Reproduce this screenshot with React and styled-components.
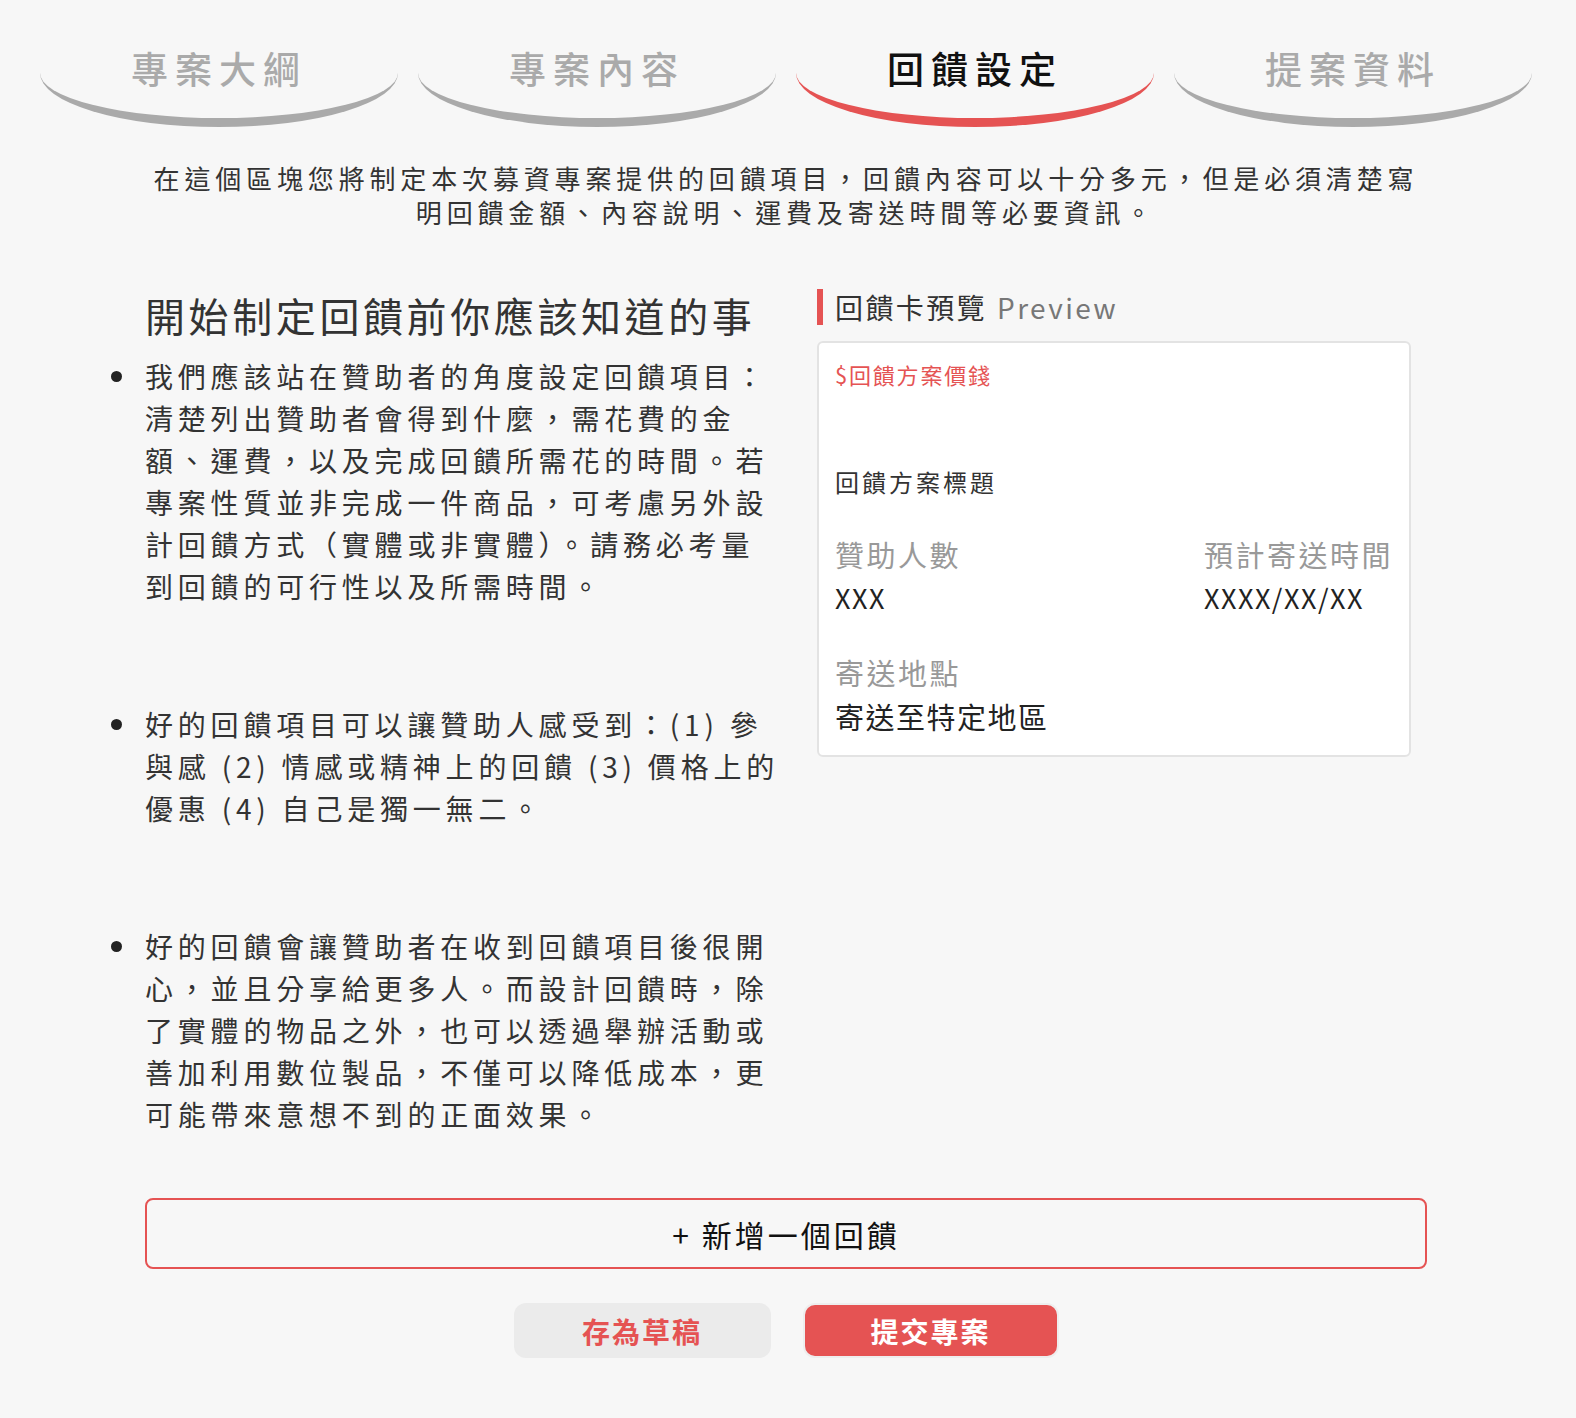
import styled, { createGlobalStyle } from "styled-components";

const GlobalStyle = createGlobalStyle`
  body {
    margin: 0;
    background: #f7f7f7;
    font-family: "Noto Sans CJK TC", "Noto Sans", sans-serif;
    color: #333;
  }
`;

const Page = styled.div`
  padding: 20px 44px 60px 40px;
`;

const Tabs = styled.nav`
  display: flex;
  gap: 20px;
`;

const Tab = styled.div`
  width: 358px;
  height: 98px;
  display: flex;
  justify-content: center;
  border-bottom: 9px solid ${(p) => (p.$active ? "#e55353" : "#aaaaaa")};
  border-radius: 0 0 179px 179px / 0 0 54px 54px;
  font-size: 37px;
  line-height: 96px;
  letter-spacing: 7px;
  font-weight: 500;
  color: ${(p) => (p.$active ? "#111" : "#aaaaaa")};
`;

const Intro = styled.p`
  margin: 34px auto 0;
  max-width: 1280px;
  text-align: center;
  font-size: 26px;
  line-height: 34px;
  letter-spacing: 4.85px;
  color: #333;
`;

const Main = styled.section`
  width: 1282px;
  margin: 60px auto 0;
`;

const Columns = styled.div`
  display: grid;
  grid-template-columns: 638px 594px;
  column-gap: 34px;
  align-items: start;
`;

const Heading = styled.h2`
  margin: 0 0 14px;
  font-size: 40px;
  line-height: 52px;
  font-weight: 400;
  letter-spacing: 3.6px;
  color: #333;
`;

const Tips = styled.ul`
  margin: 0;
  padding: 0;
  list-style: none;
`;

const Tip = styled.li`
  position: relative;
  font-size: 28px;
  line-height: 42px;
  letter-spacing: 4.8px;
  color: #333;
  margin-bottom: 96px;
  &:last-child {
    margin-bottom: 0;
  }
  &::before {
    content: "";
    position: absolute;
    left: -34px;
    top: 16px;
    width: 11px;
    height: 11px;
    border-radius: 50%;
    background: #222;
  }
`;

const PreviewTitle = styled.div`
  display: flex;
  align-items: center;
  height: 36px;
  border-left: 6px solid #e55353;
  padding-left: 12px;
  font-size: 28px;
  letter-spacing: 2.4px;
  color: #333;
  span {
    margin-left: 10px;
    color: #777;
    letter-spacing: 2.4px;
  }
`;

const Card = styled.div`
  margin-top: 16px;
  background: #fff;
  border: 2px solid #e3e3e3;
  border-radius: 6px;
  padding: 15px 16px 17px;
`;

const Price = styled.div`
  font-size: 22px;
  line-height: 33px;
  color: #e55353;
  letter-spacing: 1.8px;
  margin-bottom: 74px;
`;

const CardTitle = styled.div`
  font-size: 24px;
  line-height: 33px;
  color: #333;
  letter-spacing: 3px;
  margin-bottom: 34px;
`;

const InfoGrid = styled.div`
  display: grid;
  grid-template-columns: 1fr auto;
  row-gap: 30px;
`;

const Info = styled.div`
  display: flex;
  flex-direction: column;
`;

const Label = styled.div`
  font-size: 29px;
  line-height: 44px;
  color: #999;
  letter-spacing: 2.5px;
`;

const Value = styled.div`
  font-size: ${(p) => (p.$small ? "27px" : "29px")};
  line-height: 44px;
  color: #222;
  letter-spacing: 1.5px;
`;

const AddButton = styled.button`
  display: block;
  width: 100%;
  height: 71px;
  margin-top: 63px;
  background: transparent;
  border: 2px solid #e55353;
  border-radius: 8px;
  font-family: inherit;
  font-size: 30px;
  letter-spacing: 3px;
  color: #111;
  cursor: pointer;
`;

const Actions = styled.div`
  display: flex;
  justify-content: center;
  gap: 32px;
  margin-top: 34px;
`;

const ActionButton = styled.button`
  width: ${(p) => (p.$primary ? "256px" : "257px")};
  height: 55px;
  border: ${(p) => (p.$primary ? "2px solid #eee" : "none")};
  border-radius: 12px;
  background: ${(p) => (p.$primary ? "#e55353" : "#ebebeb")};
  color: ${(p) => (p.$primary ? "#fff" : "#e55353")};
  font-family: inherit;
  font-size: 28px;
  font-weight: 700;
  letter-spacing: 2px;
  cursor: pointer;
`;

const tabs = ["專案大綱", "專案內容", "回饋設定", "提案資料"];

const tips = [
  "我們應該站在贊助者的角度設定回饋項目：清楚列出贊助者會得到什麼，需花費的金額、運費，以及完成回饋所需花的時間。若專案性質並非完成一件商品，可考慮另外設計回饋方式（實體或非實體）。請務必考量到回饋的可行性以及所需時間。",
  "好的回饋項目可以讓贊助人感受到：(1) 參與感 (2) 情感或精神上的回饋 (3) 價格上的優惠 (4) 自己是獨一無二。",
  "好的回饋會讓贊助者在收到回饋項目後很開心，並且分享給更多人。而設計回饋時，除了實體的物品之外，也可以透過舉辦活動或善加利用數位製品，不僅可以降低成本，更可能帶來意想不到的正面效果。",
];

const App = () => {
  return (
    <>
      <GlobalStyle />
      <Page>
        <Tabs>
          {tabs.map((t) => (
            <Tab key={t} $active={t === "回饋設定"}>
              {t}
            </Tab>
          ))}
        </Tabs>

        <Intro>
          在這個區塊您將制定本次募資專案提供的回饋項目，回饋內容可以十分多元，但是必須清楚寫明回饋金額、內容說明、運費及寄送時間等必要資訊。
        </Intro>

        <Main>
          <Columns>
            <div>
              <Heading>開始制定回饋前你應該知道的事</Heading>
              <Tips>
                {tips.map((t, i) => (
                  <Tip key={i}>{t}</Tip>
                ))}
              </Tips>
            </div>

            <div>
              <PreviewTitle>
                回饋卡預覽<span>Preview</span>
              </PreviewTitle>
              <Card>
                <Price>$回饋方案價錢</Price>
                <CardTitle>回饋方案標題</CardTitle>
                <InfoGrid>
                  <Info>
                    <Label>贊助人數</Label>
                    <Value $small>XXX</Value>
                  </Info>
                  <Info>
                    <Label>預計寄送時間</Label>
                    <Value $small>XXXX/XX/XX</Value>
                  </Info>
                  <Info>
                    <Label>寄送地點</Label>
                    <Value>寄送至特定地區</Value>
                  </Info>
                </InfoGrid>
              </Card>
            </div>
          </Columns>

          <AddButton>+ 新增一個回饋</AddButton>
          <Actions>
            <ActionButton>存為草稿</ActionButton>
            <ActionButton $primary>提交專案</ActionButton>
          </Actions>
        </Main>
      </Page>
    </>
  );
};

export default App;
